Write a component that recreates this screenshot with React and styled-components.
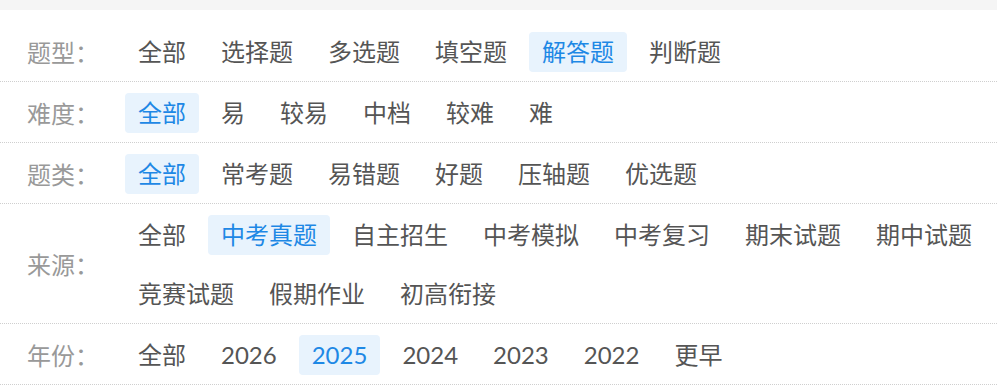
import React, { useState } from 'react';
import styled, { createGlobalStyle } from 'styled-components';

const GlobalStyle = createGlobalStyle`
  html, body {
    margin: 0;
    padding: 0;
    background: #f5f5f5;
    font-family: Lato, "Noto Sans CJK SC", sans-serif;
  }
`;

const Panel = styled.div`
  margin-top: 10px;
  padding-top: 11px;
  background: #fff;
  min-height: 381px;
  box-sizing: border-box;
`;

const Row = styled.div`
  display: flex;
  align-items: center;
  border-bottom: 1px dotted #cfcfcf;
`;

const Label = styled.div`
  flex: none;
  width: 98px;
  padding-left: 27px;
  font-size: 24px;
  color: #999;
  white-space: nowrap;
`;

const Options = styled.div`
  flex: 1;
  display: flex;
  flex-wrap: wrap;
  gap: 19px 9px;
  padding: 11px 0 9px;
`;

const Option = styled.span`
  display: inline-block;
  height: 40px;
  line-height: 40px;
  padding: 0 13px;
  border-radius: 4px;
  font-size: 24px;
  white-space: nowrap;
  cursor: pointer;
  color: ${(p) => (p.$active ? '#1e88e5' : '#555')};
  background: ${(p) => (p.$active ? '#e8f3fd' : 'transparent')};
`;

const filters = [
  { key: 'type', label: '题型', options: ['全部', '选择题', '多选题', '填空题', '解答题', '判断题'], active: '解答题' },
  { key: 'level', label: '难度', options: ['全部', '易', '较易', '中档', '较难', '难'], active: '全部' },
  { key: 'kind', label: '题类', options: ['全部', '常考题', '易错题', '好题', '压轴题', '优选题'], active: '全部' },
  {
    key: 'source',
    label: '来源',
    options: ['全部', '中考真题', '自主招生', '中考模拟', '中考复习', '期末试题', '期中试题', '竞赛试题', '假期作业', '初高衔接'],
    active: '中考真题',
  },
  { key: 'year', label: '年份', options: ['全部', '2026', '2025', '2024', '2023', '2022', '更早'], active: '2025' },
];

function App() {
  const [selected, setSelected] = useState(() =>
    filters.reduce((acc, f) => ({ ...acc, [f.key]: f.active }), {})
  );

  return (
    <>
      <GlobalStyle />
      <Panel>
        {filters.map((f) => (
          <Row key={f.key}>
            <Label>{f.label}：</Label>
            <Options>
              {f.options.map((o) => (
                <Option
                  key={o}
                  $active={selected[f.key] === o}
                  onClick={() => setSelected({ ...selected, [f.key]: o })}
                >
                  {o}
                </Option>
              ))}
            </Options>
          </Row>
        ))}
      </Panel>
    </>
  );
}

export default App;
